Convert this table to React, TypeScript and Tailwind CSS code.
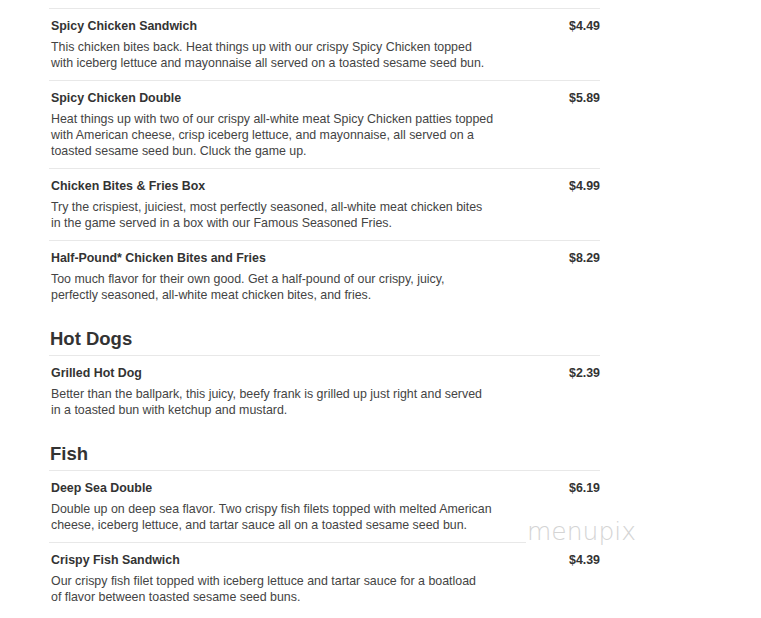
const SECTIONS = [
  {
    heading: null as string | null,
    items: [
      {
        name: "Spicy Chicken Sandwich",
        price: "$4.49",
        lines: [
          "This chicken bites back. Heat things up with our crispy Spicy Chicken topped",
          "with iceberg lettuce and mayonnaise all served on a toasted sesame seed bun.",
        ],
      },
      {
        name: "Spicy Chicken Double",
        price: "$5.89",
        lines: [
          "Heat things up with two of our crispy all-white meat Spicy Chicken patties topped",
          "with American cheese, crisp iceberg lettuce, and mayonnaise, all served on a",
          "toasted sesame seed bun. Cluck the game up.",
        ],
      },
      {
        name: "Chicken Bites & Fries Box",
        price: "$4.99",
        lines: [
          "Try the crispiest, juiciest, most perfectly seasoned, all-white meat chicken bites",
          "in the game served in a box with our Famous Seasoned Fries.",
        ],
      },
      {
        name: "Half-Pound* Chicken Bites and Fries",
        price: "$8.29",
        lines: [
          "Too much flavor for their own good. Get a half-pound of our crispy, juicy,",
          "perfectly seasoned, all-white meat chicken bites, and fries.",
        ],
      },
    ],
  },
  {
    heading: "Hot Dogs",
    items: [
      {
        name: "Grilled Hot Dog",
        price: "$2.39",
        lines: [
          "Better than the ballpark, this juicy, beefy frank is grilled up just right and served",
          "in a toasted bun with ketchup and mustard.",
        ],
      },
    ],
  },
  {
    heading: "Fish",
    items: [
      {
        name: "Deep Sea Double",
        price: "$6.19",
        lines: [
          "Double up on deep sea flavor. Two crispy fish filets topped with melted American",
          "cheese, iceberg lettuce, and tartar sauce all on a toasted sesame seed bun.",
        ],
      },
      {
        name: "Crispy Fish Sandwich",
        price: "$4.39",
        lines: [
          "Our crispy fish filet topped with iceberg lettuce and tartar sauce for a boatload",
          "of flavor between toasted sesame seed buns.",
        ],
      },
    ],
  },
];

export default function App() {
  return (
    <div className="relative min-h-[618px] w-[761px] bg-white font-['Liberation_Sans',Arial,sans-serif] text-[#333]">
      <div className="ml-[49px] w-[551px] pt-[8px]">
        {SECTIONS.map((section, i) => (
          <div key={i}>
            {section.heading && (
              <h2 className="mt-[16px] pb-[5px] pl-px text-[18.5px] font-bold leading-[22px] text-[#333]">
                {section.heading}
              </h2>
            )}
            {section.items.map((item) => (
              <div
                key={item.name}
                className="border-t border-[#e8e8e8] pb-[9px] pl-[2px] pt-[9px]"
              >
                <div className="flex justify-between text-[12.4px] font-bold leading-[16px] text-[#333]">
                  <span>{item.name}</span>
                  <span>{item.price}</span>
                </div>
                <p className="mt-[5px] text-[12.4px] leading-[16px] text-[#444]">
                  {item.lines.map((line) => (
                    <span key={line} className="block whitespace-nowrap">
                      {line}
                    </span>
                  ))}
                </p>
              </div>
            ))}
          </div>
        ))}
      </div>

      {/* watermark */}
      <div className="absolute left-[526px] top-[515px] flex h-[32px] w-[150px] items-center bg-white pl-[1px]">
        <span className="font-['DejaVu_Sans',sans-serif] text-[25px] font-extralight leading-none text-[#d4d4d4]">
          menupix
        </span>
      </div>
    </div>
  );
}
